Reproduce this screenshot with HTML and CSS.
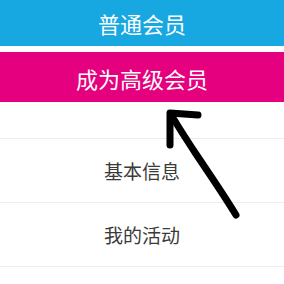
FILE: index.html
```html
<!DOCTYPE html>
<html lang="zh-CN">
<head>
  <meta charset="UTF-8" />
  <meta name="viewport" content="width=device-width, initial-scale=1.0"/>
  <title>会员中心</title>
  <link rel="stylesheet" href="styles.css">
</head>
<body>

<div class="page">
  <!-- 会员按钮 -->
  <div class="member-btns">
    <a href="#" class="btn btn-normal">普通会员</a>
    <a href="#" class="btn btn-vip">成为高级会员</a>
  </div>

  <!-- 菜单 -->
  <ul class="menu">
    <li class="menu-item menu-top"></li>
    <li class="menu-item">基本信息</li>
    <li class="menu-item">我的活动</li>
  </ul>

  <!-- 手绘箭头 -->
  <svg class="arrow" width="284" height="284" viewBox="0 0 284 284">
    <g fill="none" stroke="#000" stroke-width="7" stroke-linecap="round" stroke-linejoin="round">
      <path d="M236 215 C222 192 208 172 196 154 C186 139 178 126 171 115"/>
      <path d="M198 115 L170 113 L170 145"/>
    </g>
  </svg>
</div>

</body>
</html>
```

FILE: styles.css
```css
* {
  margin: 0;
  padding: 0;
  box-sizing: border-box;
}

html,
body {
  background: #fff;
  font-family: "Noto Sans CJK SC", "Liberation Sans", sans-serif;
  color: #333;
}

a {
  text-decoration: none;
  color: inherit;
}

.page {
  position: relative;
  width: 284px;
  height: 284px;
  overflow: hidden;
}

/* 会员按钮 */
.member-btns {
  display: flex;
  flex-direction: column;
  gap: 6px;
}

.btn {
  display: flex;
  justify-content: center;
  align-items: center;
  color: #fdfdfd;
  font-size: 22px;
}

.btn-normal {
  height: 46px;
  background: #17a7e1;
}

.btn-vip {
  height: 50px;
  background: #e4007f;
  padding-top: 2px;
}

/* 菜单 */
.menu {
  list-style: none;
}

.menu-item {
  display: flex;
  justify-content: center;
  align-items: center;
  height: 64px;
  border-bottom: 1px solid #ececec;
  font-size: 19px;
  color: #3a3a3a;
}

.menu-top {
  height: 37px;
}

/* 箭头 */
.arrow {
  position: absolute;
  top: 0;
  left: 0;
  pointer-events: none;
}
```
